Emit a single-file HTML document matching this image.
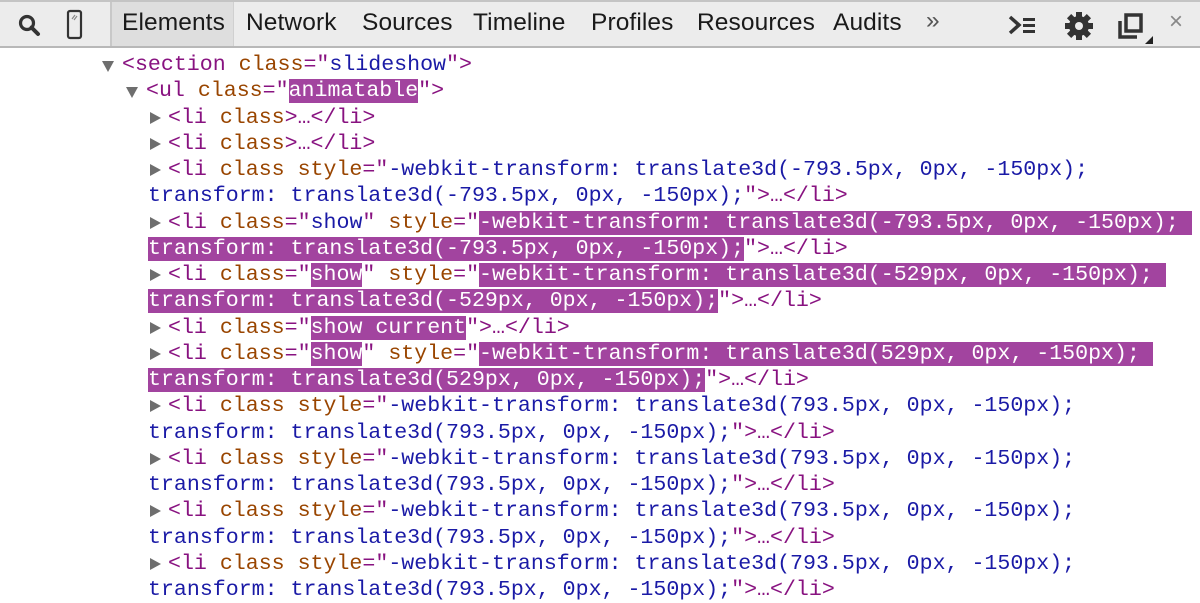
<!DOCTYPE html>
<html><head><meta charset="utf-8"><style>
*{margin:0;padding:0;box-sizing:border-box}
body{width:1200px;height:603px;background:#fff;overflow:hidden;position:relative;font-family:"Liberation Sans",sans-serif}
#tb{position:absolute;left:0;top:0;width:1200px;height:48px;background:#ececec;border-top:2px solid #c4c4c4;border-bottom:2px solid #b8b8b8}
.t{position:absolute;top:7px;font-size:24.5px;color:#1a1a1a;letter-spacing:0.1px}
#sel{position:absolute;left:110px;top:0;width:124px;height:44px;background:#dedede;border-left:2px solid #c8c8c8;border-right:1px solid #d0d0d0}
#code{position:absolute;left:0;top:52px;font-family:"Liberation Mono",monospace;font-size:21.6px;line-height:26.25px;color:#881280}
.l{position:relative;height:26.25px;white-space:pre}
.tri{position:absolute;top:7px;width:0;height:0}
.r{border-top:6px solid transparent;border-bottom:6px solid transparent;border-left:11px solid #6e6e6e}
.d{top:9px;border-left:6.5px solid transparent;border-right:6.5px solid transparent;border-top:11px solid #6e6e6e}
.a{color:#994500}.v{color:#1a1aa6}
.h{background:#a2449f;color:#fff}
</style></head><body>
<div id="tb">
<div id="sel"></div>
<svg style="position:absolute;left:16px;top:10px" width="28" height="28" viewBox="0 0 28 28"><circle cx="11" cy="11" r="6.5" fill="none" stroke="#333" stroke-width="3.2"/><line x1="15.5" y1="15.5" x2="22" y2="22" stroke="#333" stroke-width="4" stroke-linecap="round"/></svg>
<svg style="position:absolute;left:65px;top:7px" width="20" height="32" viewBox="0 0 20 32"><rect x="3" y="2" width="13" height="27" rx="2" fill="none" stroke="#333" stroke-width="2.2"/><line x1="7" y1="10" x2="10" y2="6" stroke="#888" stroke-width="1.2"/><line x1="9" y1="11" x2="12" y2="7" stroke="#888" stroke-width="1.2"/></svg>
<div class="t" style="left:122px">Elements</div>
<div class="t" style="left:246px">Network</div>
<div class="t" style="left:362px">Sources</div>
<div class="t" style="left:473px">Timeline</div>
<div class="t" style="left:591px">Profiles</div>
<div class="t" style="left:697px">Resources</div>
<div class="t" style="left:833px">Audits</div>
<div class="t" style="left:926px;color:#555;top:5px">»</div>
<svg style="position:absolute;left:1007px;top:11px" width="32" height="26" viewBox="0 0 32 26"><path d="M3 4 L12 12 L3 20" fill="none" stroke="#333" stroke-width="3.5"/><rect x="16" y="5" width="12" height="3" fill="#333"/><rect x="16" y="11" width="12" height="3" fill="#333"/><rect x="16" y="17" width="12" height="3" fill="#333"/></svg>
<svg style="position:absolute;left:1063px;top:8px" width="32" height="32" viewBox="0 0 32 32"><g fill="#333"><circle cx="16" cy="16" r="10"/><rect x="13" y="2" width="6" height="28"/><rect x="2" y="13" width="28" height="6"/><rect x="13" y="2" width="6" height="28" transform="rotate(45 16 16)"/><rect x="13" y="2" width="6" height="28" transform="rotate(-45 16 16)"/></g><circle cx="16" cy="16" r="4" fill="#ececec"/></svg>
<svg style="position:absolute;left:1117px;top:10px" width="40" height="34" viewBox="0 0 40 34"><path d="M3 9 V25 H20" fill="none" stroke="#333" stroke-width="3.5"/><rect x="9" y="3" width="15" height="16" fill="none" stroke="#333" stroke-width="3.5"/><path d="M28 32 L36 24 V32 Z" fill="#222"/></svg>
<div class="t" style="left:1169px;top:6px;color:#888;font-size:24px">×</div>
</div>
<div id="code"><div class="l" style="padding-left:122px"><i class="tri d" style="left:102px"></i>&lt;section <span class="a">class</span>="<span class="v">slideshow</span>"&gt;</div><div class="l" style="padding-left:146px"><i class="tri d" style="left:126px"></i>&lt;ul <span class="a">class</span>="<span class="h">animatable</span>"&gt;</div><div class="l" style="padding-left:168px"><i class="tri r" style="left:150px"></i>&lt;li <span class="a">class</span>&gt;…&lt;/li&gt;</div><div class="l" style="padding-left:168px"><i class="tri r" style="left:150px"></i>&lt;li <span class="a">class</span>&gt;…&lt;/li&gt;</div><div class="l" style="padding-left:168px"><i class="tri r" style="left:150px"></i>&lt;li <span class="a">class style</span>="<span class="v">-webkit-transform: translate3d(-793.5px, 0px, -150px);</span></div><div class="l" style="padding-left:148px"><span class="v">transform: translate3d(-793.5px, 0px, -150px);</span>"&gt;…&lt;/li&gt;</div><div class="l" style="padding-left:168px"><i class="tri r" style="left:150px"></i>&lt;li <span class="a">class</span>="<span class="v">show</span>" <span class="a">style</span>="<span class="h">-webkit-transform: translate3d(-793.5px, 0px, -150px); </span></div><div class="l" style="padding-left:148px"><span class="h">transform: translate3d(-793.5px, 0px, -150px);</span>"&gt;…&lt;/li&gt;</div><div class="l" style="padding-left:168px"><i class="tri r" style="left:150px"></i>&lt;li <span class="a">class</span>="<span class="h">show</span>" <span class="a">style</span>="<span class="h">-webkit-transform: translate3d(-529px, 0px, -150px); </span></div><div class="l" style="padding-left:148px"><span class="h">transform: translate3d(-529px, 0px, -150px);</span>"&gt;…&lt;/li&gt;</div><div class="l" style="padding-left:168px"><i class="tri r" style="left:150px"></i>&lt;li <span class="a">class</span>="<span class="h">show current</span>"&gt;…&lt;/li&gt;</div><div class="l" style="padding-left:168px"><i class="tri r" style="left:150px"></i>&lt;li <span class="a">class</span>="<span class="h">show</span>" <span class="a">style</span>="<span class="h">-webkit-transform: translate3d(529px, 0px, -150px); </span></div><div class="l" style="padding-left:148px"><span class="h">transform: translate3d(529px, 0px, -150px);</span>"&gt;…&lt;/li&gt;</div><div class="l" style="padding-left:168px"><i class="tri r" style="left:150px"></i>&lt;li <span class="a">class style</span>="<span class="v">-webkit-transform: translate3d(793.5px, 0px, -150px);</span></div><div class="l" style="padding-left:148px"><span class="v">transform: translate3d(793.5px, 0px, -150px);</span>"&gt;…&lt;/li&gt;</div><div class="l" style="padding-left:168px"><i class="tri r" style="left:150px"></i>&lt;li <span class="a">class style</span>="<span class="v">-webkit-transform: translate3d(793.5px, 0px, -150px);</span></div><div class="l" style="padding-left:148px"><span class="v">transform: translate3d(793.5px, 0px, -150px);</span>"&gt;…&lt;/li&gt;</div><div class="l" style="padding-left:168px"><i class="tri r" style="left:150px"></i>&lt;li <span class="a">class style</span>="<span class="v">-webkit-transform: translate3d(793.5px, 0px, -150px);</span></div><div class="l" style="padding-left:148px"><span class="v">transform: translate3d(793.5px, 0px, -150px);</span>"&gt;…&lt;/li&gt;</div><div class="l" style="padding-left:168px"><i class="tri r" style="left:150px"></i>&lt;li <span class="a">class style</span>="<span class="v">-webkit-transform: translate3d(793.5px, 0px, -150px);</span></div><div class="l" style="padding-left:148px"><span class="v">transform: translate3d(793.5px, 0px, -150px);</span>"&gt;…&lt;/li&gt;</div></div>
</body></html>
